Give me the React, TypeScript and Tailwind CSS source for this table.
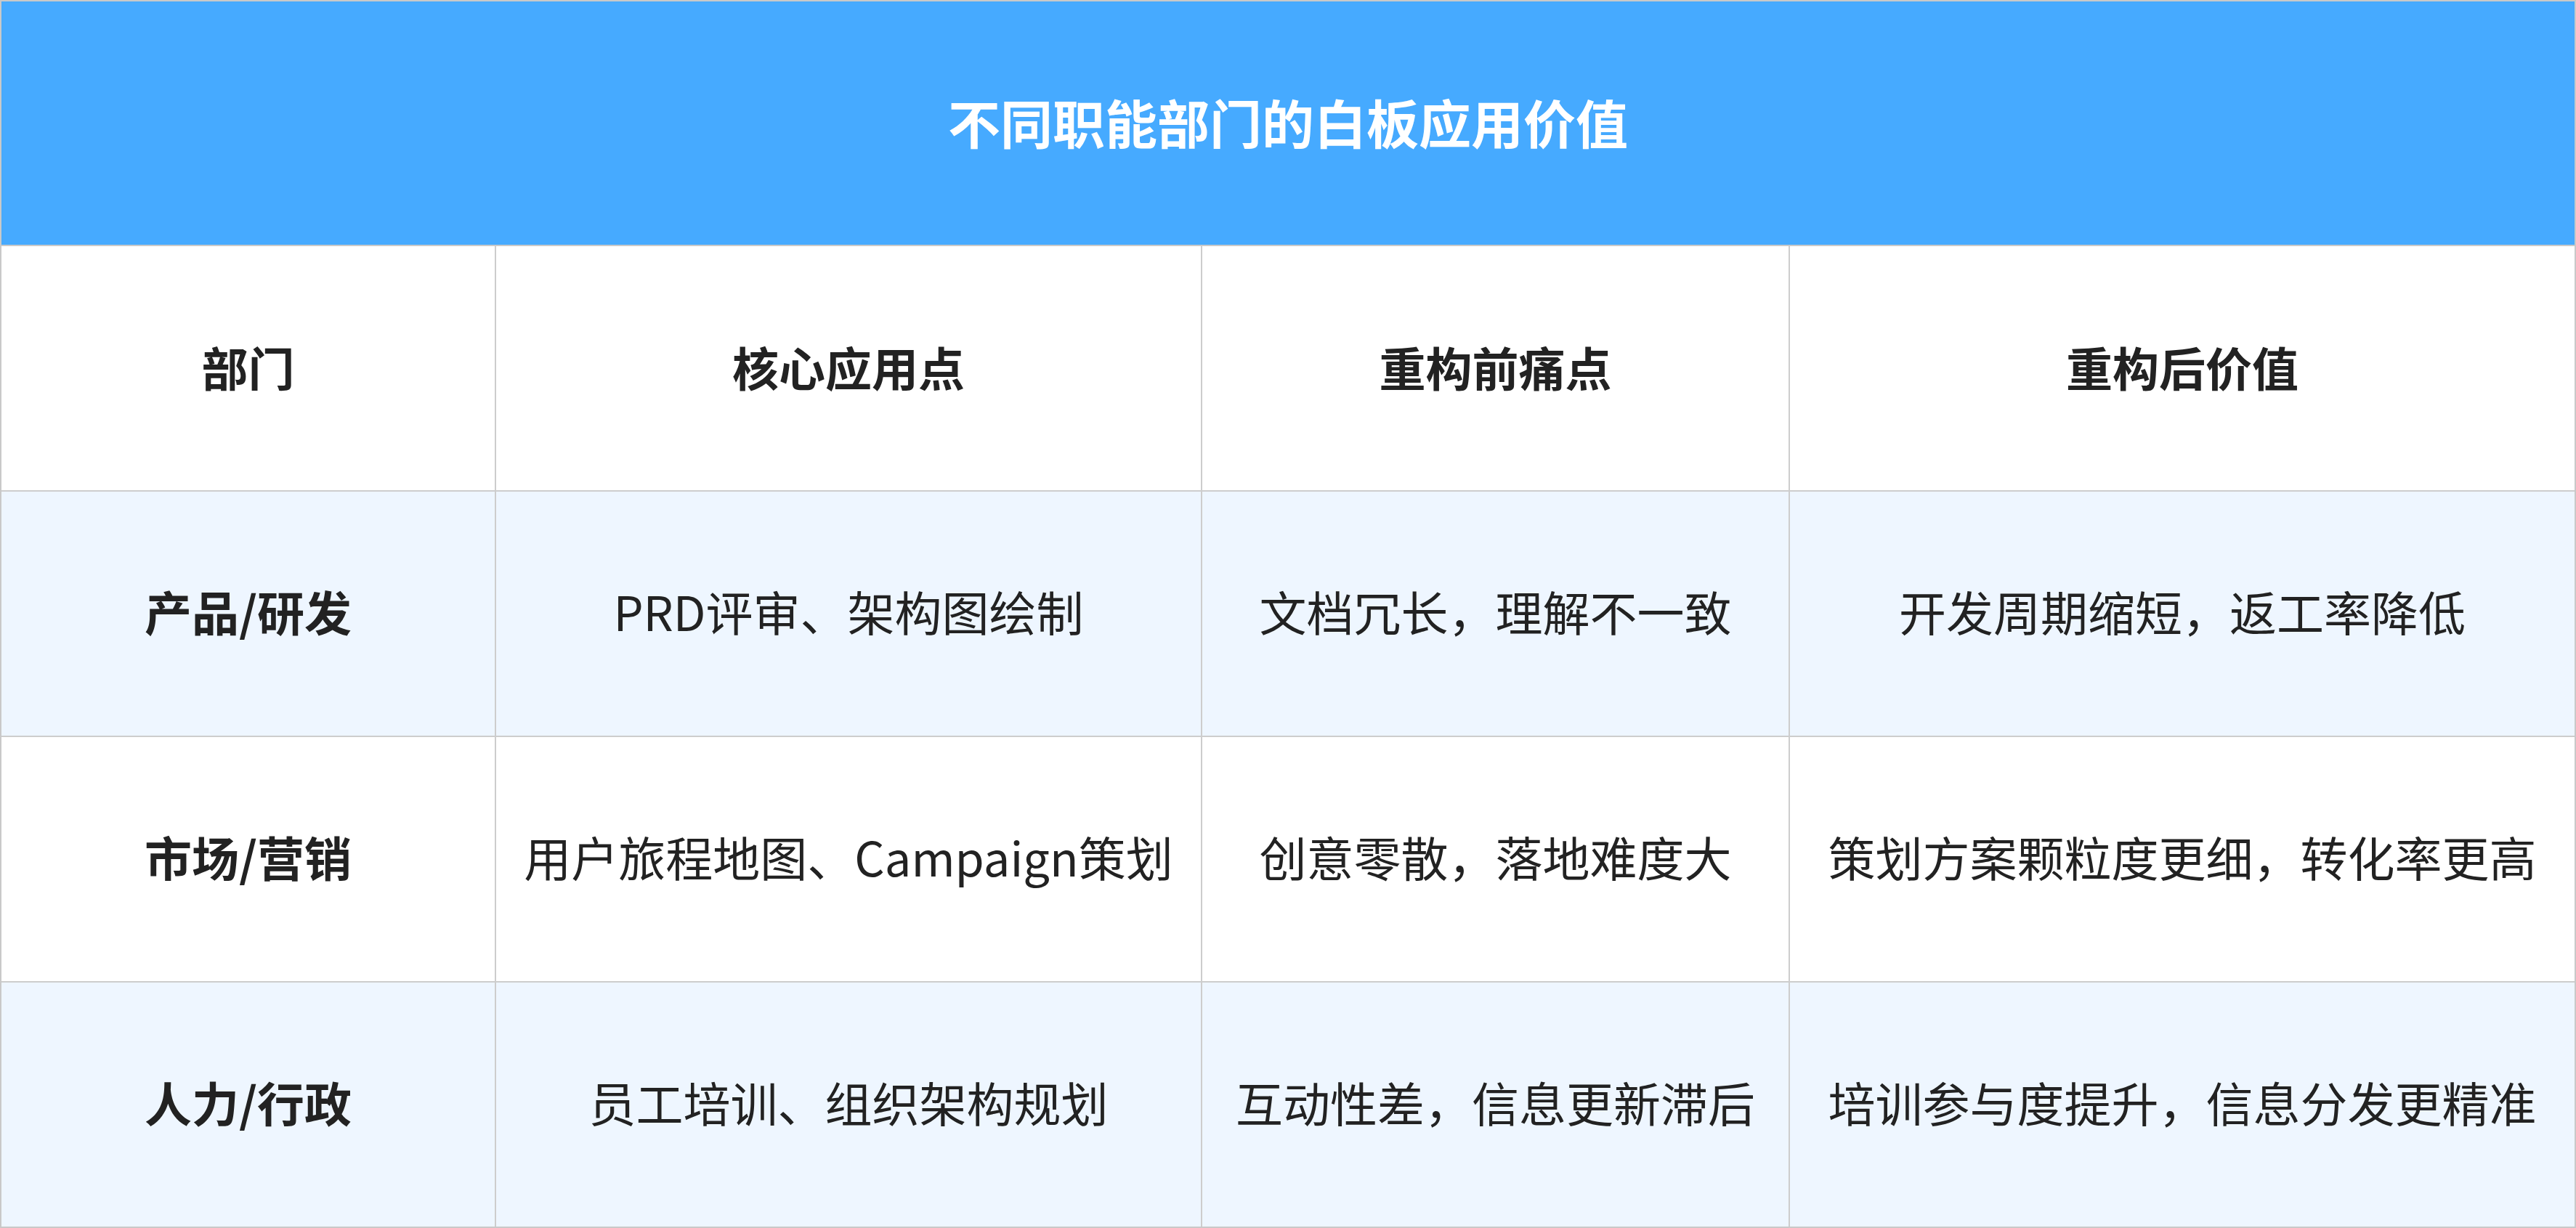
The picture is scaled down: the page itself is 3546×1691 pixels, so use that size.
const columns = ["部门", "核心应用点", "重构前痛点", "重构后价值"];

const rows = [
  ["产品/研发", "PRD评审、架构图绘制", "文档冗长，理解不一致", "开发周期缩短，返工率降低"],
  ["市场/营销", "用户旅程地图、Campaign策划", "创意零散，落地难度大", "策划方案颗粒度更细，转化率更高"],
  ["人力/行政", "员工培训、组织架构规划", "互动性差，信息更新滞后", "培训参与度提升，信息分发更精准"],
];

const App = () => {
  return (
    <div
      className="w-[3546px] h-[1691px] border-2 border-[#c9c9c9] bg-white text-[#222222]"
      style={{ fontFamily: '"Noto Sans CJK SC", "Noto Sans", sans-serif' }}
    >
      <div className="h-[335px] bg-[#46aaff] flex items-center justify-center pb-[6px]">
        <h1 className="text-[72px] font-bold text-white leading-none">不同职能部门的白板应用价值</h1>
      </div>
      <div className="grid grid-cols-[679px_970px_807px_1080px] auto-rows-[336px] gap-[2px] bg-[#cdcdcd] border-t-2 border-[#c9c9c9]">
        {columns.map((col) => (
          <div key={col} className="bg-white flex items-center justify-center text-[64px] font-bold pb-[6px]">
            {col}
          </div>
        ))}
        {rows.map((row, i) =>
          row.map((cell, j) => (
            <div
              key={cell}
              className={`flex items-center justify-center text-[65px] whitespace-nowrap pb-[6px] ${
                i % 2 === 0 ? "bg-[#eef6ff]" : "bg-white"
              } ${j === 0 ? "font-bold" : "font-normal"}`}
            >
              {cell}
            </div>
          ))
        )}
      </div>
    </div>
  );
};

export default App;
